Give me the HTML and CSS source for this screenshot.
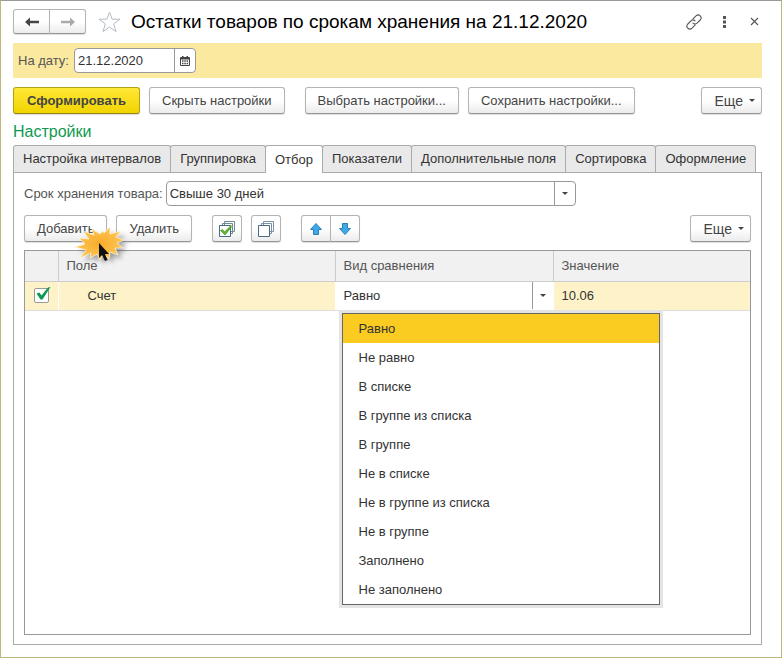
FILE: index.html
```html
<!DOCTYPE html>
<html lang="ru">
<head>
<meta charset="utf-8">
<meta name="viewport" content="width=device-width, initial-scale=1">
<title>Остатки товаров по срокам хранения</title>
<link rel="stylesheet" href="styles.css">
</head>
<body>
<main class="window">
  <header class="titlebar">
    <div class="pair">
      <button class="btn nav" type="button" aria-label="Назад"><svg width="14" height="10" viewBox="0 0 14 10"><path d="M0 5 5 0.5V3.8H14V6.2H5V9.5Z" fill="#444"/></svg></button>
      <button class="btn nav" type="button" aria-label="Вперед"><svg width="14" height="10" viewBox="0 0 14 10"><path d="M14 5 9 0.5V3.8H0V6.2H9V9.5Z" fill="#aaa"/></svg></button>
    </div>
    <button class="plain star" type="button" aria-label="В избранное"><svg width="23" height="22" viewBox="0 0 23 22"><path d="M11.5 1.2 14.1 8.2H22L15.7 12.8 18 20.6 11.5 16 5 20.6 7.3 12.8 1 8.2H8.9Z" fill="#fff" stroke="#b4bcc4"/></svg></button>
    <h1>Остатки товаров по срокам хранения на 21.12.2020</h1>
    <div class="tools">
      <button class="plain" type="button" aria-label="Ссылка"><svg width="16" height="16" viewBox="0 0 16 16" fill="none" stroke="#555" stroke-width="1.1" stroke-linecap="round"><path d="M7 4.8 10 1.8Q12.2-.2 14.2 1.8T14.2 6L11 9.2Q9 11 7 9.2M9 11.2 6 14.2Q3.8 16.2 1.8 14.2T1.8 10L5 6.8Q7 5 9 6.8"/></svg></button>
      <button class="plain" type="button" aria-label="Меню"><svg width="16" height="16" viewBox="0 0 16 16" fill="#555"><path d="M7 2h3v3H7zM7 6.500h3v3H7zM7 11h3v3H7z"/></svg></button>
      <button class="plain" type="button" aria-label="Закрыть"><svg width="16" height="16" viewBox="0 0 16 16" fill="none" stroke="#555" stroke-width="1.1"><path d="M5 4 12 11M12 4 5 11"/></svg></button>
    </div>
  </header>

  <div class="datebar">
    <label for="date">На дату:</label>
    <div class="field date">
      <input id="date" type="text" value="21.12.2020">
      <button type="button" aria-label="Календарь"><svg width="10" height="10" viewBox="0 0 10 10"><path d="M1 1H2V0H3.500V1H6.500V0H8V1H9Q10 1 10 2V9Q10 10 9 10H1Q0 10 0 9V2Q0 1 1 1Z" fill="#444"/><path d="M1 3.500H9V9H1Z" fill="#fff"/><path d="M2 5H3.500M4.300 5H5.800M6.600 5H8.100M2 7.500H3.500M4.300 7.500H5.800M6.600 7.500H8.100" stroke="#444" stroke-width="1.300"/></svg></button>
    </div>
  </div>

  <div class="actions">
    <button class="btn primary" type="button">Сформировать</button>
    <button class="btn" type="button">Скрыть настройки</button>
    <button class="btn group-start" type="button">Выбрать настройки...</button>
    <button class="btn" type="button">Сохранить настройки...</button>
    <button class="btn more" type="button">Еще <i class="caret"></i></button>
  </div>

  <h2>Настройки</h2>
  <div class="tabs" role="tablist">
    <button type="button" role="tab">Настройка интервалов</button>
    <button type="button" role="tab">Группировка</button>
    <button type="button" role="tab" aria-selected="true">Отбор</button>
    <button type="button" role="tab">Показатели</button>
    <button type="button" role="tab">Дополнительные поля</button>
    <button type="button" role="tab">Сортировка</button>
    <button type="button" role="tab">Оформление</button>
  </div>

  <section class="panel">
    <div class="term">
      <label for="term">Срок хранения товара:</label>
      <div class="field wide">
        <input id="term" type="text" value="Свыше 30 дней">
        <button type="button" aria-label="Выбрать срок"><i class="caret"></i></button>
      </div>
    </div>

    <div class="toolbar">
      <div class="add">
        <button class="btn" type="button">Добавить</button>
        <svg class="burst" width="64" height="44" viewBox="0 0 64 44" aria-hidden="true">
          <defs>
            <radialGradient id="glow"><stop offset="0" stop-color="#f9ab2a"/><stop offset="1" stop-color="#fdc655"/></radialGradient>
            <path id="spikes" d="M13 9 24 13 22 7 30 12 33 9 34 11 40 5 40 12 51 9 46 15 54 18 47 21 53 26 45 26 48 33 40 30 39 37 34 32 30 38 27 32 20 36 21 31 10 36 16 28 5 25 15 22 9 16 19 17Z"/>
          </defs>
          <use class="shade" href="#spikes"/>
          <use href="#spikes" fill="url(#glow)" stroke="#fff3d8" stroke-width=".8"/>
          <path d="M29 21V36L32 33 35 39 37.500 38 35 32H39Z" fill="#111"/>
        </svg>
      </div>
      <button class="btn" type="button">Удалить</button>
      <button class="btn icon group-start" type="button" aria-label="Установить флажки"><svg width="16" height="16" viewBox="0 0 16 16" fill="#fff" stroke="#476a85"><path d="M5.500.5h10v10h-10zM3.500 2.500h10v10h-10z" stroke="#6f8b93"/><path d="M.5 4.500h11v11H.5z"/><path d="M1.500 9.500 3.500 8.500 5.500 11 12 4.500 12.500 6 6 14Z" fill="#5ab72c" stroke="#3a8a1c" stroke-width=".6"/></svg></button>
      <button class="btn icon" type="button" aria-label="Снять флажки"><svg width="16" height="16" viewBox="0 0 16 16" fill="#fff" stroke="#476a85"><path d="M5.500.5h10v10h-10zM3.500 2.500h10v10h-10z" stroke="#7892a8"/><path d="M.5 4.500h11v11H.5z"/></svg></button>
      <div class="pair group-start">
        <button class="btn icon" type="button" aria-label="Вверх"><svg width="12" height="12" viewBox="0 0 12 12"><path d="M6 .5 11.500 6.500H8.500V11.500H3.500V6.500H.5Z" fill="#3fa9e8" stroke="#2b7fb5"/></svg></button>
        <button class="btn icon" type="button" aria-label="Вниз"><svg width="12" height="12" viewBox="0 0 12 12"><path d="M6 11.500 11.500 5.500H8.500V.5H3.500V5.500H.5Z" fill="#3fa9e8" stroke="#2b7fb5"/></svg></button>
      </div>
      <button class="btn more" type="button">Еще <i class="caret"></i></button>
    </div>

    <div class="list">
      <table>
        <thead>
          <tr><th class="c-check"></th><th class="c-field">Поле</th><th class="c-kind">Вид сравнения</th><th>Значение</th></tr>
        </thead>
        <tbody>
          <tr>
            <td><label class="tick"><input type="checkbox" checked aria-label="Использовать"><svg width="18" height="16" viewBox="0 0 18 16"><path d="M2.500 6.500 5.500 5.500 7.500 8.500 14 .5 16.500 0 8.500 12.500 6.500 12.500Z" fill="#0d9a50"/></svg></label></td>
            <td class="indent">Счет</td>
            <td class="edit">
              <div class="combo">
                <input type="text" value="Равно" aria-label="Вид сравнения">
                <button type="button" aria-label="Список"><i class="caret"></i></button>
              </div>
              <ul class="menu" role="listbox">
                <li role="option" aria-selected="true">Равно</li>
                <li role="option">Не равно</li>
                <li role="option">В списке</li>
                <li role="option">В группе из списка</li>
                <li role="option">В группе</li>
                <li role="option">Не в списке</li>
                <li role="option">Не в группе из списка</li>
                <li role="option">Не в группе</li>
                <li role="option">Заполнено</li>
                <li role="option">Не заполнено</li>
              </ul>
            </td>
            <td>10.06</td>
          </tr>
        </tbody>
      </table>
    </div>
  </section>
</main>
</body>
</html>
```
FILE: styles.css
```css
* { box-sizing: border-box; }

body {
  margin: 0;
  font: 13px/16px "Liberation Sans", Arial, sans-serif;
  color: #333;
  background: #fff;
}

button, input { font: inherit; color: inherit; }
button { padding: 0; }
svg { display: block; }

.window {
  display: flex;
  flex-direction: column;
  min-height: 100vh;
  padding: 8px 19px 12px 12px;
  border: 1px solid #bdb77c;
  border-top-color: #999;
}

.titlebar { display: flex; align-items: center; height: 25px; }
.pair { display: flex; }
.plain { border: 0; background: none; }
.star { margin: 0 10px 0 12px; }
h1 { margin: 0; font-size: 19px; line-height: 24px; font-weight: 400; color: #000; white-space: nowrap; }
.tools { display: flex; gap: 14px; margin-left: auto; }

.btn {
  display: flex;
  align-items: center;
  justify-content: center;
  height: 27px;
  padding: 0 12px;
  border: 1px solid #b4b4b4;
  border-bottom-color: #969696;
  border-radius: 3px;
  background: linear-gradient(#fff 50%, #ececec);
  box-shadow: 0 1px 1px #ddd;
  color: #444;
  white-space: nowrap;
}
.nav { width: 37px; height: 25px; padding: 0; }
.pair .btn:first-child { border-radius: 3px 0 0 3px; }
.pair .btn:last-child { border-radius: 0 3px 3px 0; margin-left: -1px; }
.primary {
  padding: 0 13px;
  border-color: #b5a114;
  border-bottom-color: #94830c;
  background: linear-gradient(#ffe838, #f2d400);
  font-weight: 700;
}
.icon { width: 30px; padding: 0; }
.pair .icon { width: 30px; }
.more { margin-left: auto; padding: 0 6px 0 13px; gap: 6px; font-size: 14px; }
.caret {
  border: 3px solid transparent;
  border-top-color: #444;
  border-bottom: 0;
}

.datebar {
  display: flex;
  align-items: center;
  gap: 5px;
  margin-top: 9px;
  padding: 5px;
  background: #fbe9a0;
  color: #555;
}

.field {
  display: flex;
  height: 25px;
  border: 1px solid #999;
  border-radius: 4px;
  background: #fff;
  overflow: hidden;
  color: #333;
}
.field input { flex: 1; min-width: 0; padding: 0 3px; border: 0; background: none; outline: 0; }
.field button, .combo button {
  display: flex;
  align-items: center;
  justify-content: center;
  width: 21px;
  border: 0;
  border-left: 1px solid #999;
  background: none;
}
.date { width: 122px; }
.wide { width: 410px; }

.actions, .toolbar { display: flex; gap: 9px; margin-top: 9px; }
.group-start { margin-left: 11px; }

h2 { margin: 8px 0 3px; font-size: 16px; line-height: 20px; font-weight: 400; color: #0d9a50; }

.tabs { display: flex; }
.tabs button {
  height: 27px;
  padding: 0 9px;
  border: 1px solid #aaa;
  border-bottom: 0;
  border-radius: 3px 3px 0 0;
  background: #e9e9e9;
  white-space: nowrap;
}
.tabs button + button { margin-left: -1px; }
.tabs [aria-selected] { position: relative; height: 28px; margin-bottom: -1px; background: #fff; }

.panel {
  flex: 1;
  display: flex;
  flex-direction: column;
  padding: 8px 10px 9px;
  border: 1px solid #aaa;
}
.term { display: flex; align-items: center; gap: 3px; color: #555; }
.add { position: relative; }
.burst { position: absolute; left: 46px; top: 7px; overflow: visible; z-index: 1; }
.shade { fill: #555; opacity: .5; filter: blur(2px); transform: translate(4px, 4px); }

.list { flex: 1; margin-top: 8px; border: 1px solid #999; }
table { width: 100%; border-collapse: collapse; table-layout: fixed; }
th {
  height: 30px;
  padding: 0 8px;
  border-bottom: 1px solid #ccc;
  background: #f1f1f1;
  text-align: left;
  font-weight: 400;
  color: #555;
}
th + th { border-left: 1px solid #ccc; }
.c-check { width: 33px; }
.c-field { width: 277px; }
.c-kind { width: 218px; }
td {
  height: 29px;
  padding: 0 8px;
  border-bottom: 1px solid #ddd;
  background: #fdf2c8;
}
td + td { border-left: 1px solid #fff; }
.indent { padding-left: 29px; }

.tick { position: relative; display: block; width: 15px; height: 15px; margin-left: 1px; }
.tick input {
  appearance: none;
  display: block;
  width: 15px;
  height: 15px;
  margin: 0;
  border: 1px solid #999;
  border-radius: 2px;
  background: #fff;
}
.tick svg { position: absolute; left: 0; top: -1px; }

.edit { position: relative; padding: 0; background: #fff; }
.combo { display: flex; height: 27px; }
.combo input { flex: 1; min-width: 0; padding: 0 8px; border: 0; outline: 0; background: none; }
.menu {
  position: absolute;
  z-index: 2;
  left: 6px;
  top: 31px;
  width: 318px;
  margin: 0;
  padding: 0;
  border: 1px solid #666;
  box-shadow: 0 0 0 3px #e4e4e4;
  background: #fff;
  list-style: none;
}
.menu li { height: 29px; padding: 0 16px; line-height: 29px; }
.menu [aria-selected] { background: #facb20; }
```
